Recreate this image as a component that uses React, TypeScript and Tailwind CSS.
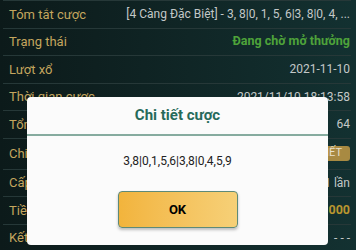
const rows: { label: string; value: string; kind?: 'green' | 'gold' | 'button'; tall?: boolean }[] = [
  { label: 'Tóm tắt cược', value: '[4 Càng Đặc Biệt] - 3, 8|0, 1, 5, 6|3, 8|0, 4, ...' },
  { label: 'Trạng thái', value: 'Đang chờ mở thưởng', kind: 'green' },
  { label: 'Lượt xổ', value: '2021-11-10' },
  { label: 'Thời gian cược', value: '2021/11/10 18:13:58' },
  { label: 'Tổng số cược', value: '64' },
  { label: 'Chi tiết cược', value: 'CHI TIẾT', kind: 'button', tall: true },
  { label: 'Cấp số nhân', value: '1 lần' },
  { label: 'Tiền cược', value: '64.000', kind: 'gold' },
  { label: 'Kết quả', value: '- - -' },
];

export default function App() {
  return (
    <div
      className="relative w-[356px] h-[250px] overflow-hidden bg-gradient-to-r from-[#0c1a1a] to-[#133131]"
      style={{ fontFamily: 'Roboto, "Noto Sans", sans-serif' }}
    >
      {/* danh sách chi tiết */}
      <div className="ml-[3px] mr-[5px] border-t border-[#263838]">
        {rows.map((r) => (
          <div
            key={r.label}
            className={`flex items-center justify-between border-b border-[#263838] pl-[6px] pr-[1px] ${r.tall ? 'h-[31px]' : 'h-[27.5px]'}`}
          >
            <span className="text-[13px] text-[#c4a65e] whitespace-nowrap">{r.label}</span>
            {r.kind === 'button' ? (
              <span className="rounded-[3px] bg-[#a88a42] px-[8px] h-[15px] flex items-center text-[11px] text-[#e8e0cc]">
                {r.value}
              </span>
            ) : (
              <span
                className={`whitespace-nowrap ${
                  r.kind === 'green'
                    ? 'text-[12.5px] text-[#4ea33a] font-bold'
                    : r.kind === 'gold'
                      ? 'text-[12.5px] text-[#b8962f] font-bold'
                      : 'text-[12px] text-[#c3c8c8]'
                }`}
              >
                {r.value}
              </span>
            )}
          </div>
        ))}
      </div>

      {/* hộp thoại */}
      <div className="absolute left-[27px] top-[97px] w-[301px] h-[148px] rounded-[4px] bg-[#fbfbfb] flex flex-col">
        <div className="h-[37px] flex items-center justify-center text-[15px] font-bold text-[#266a5a]">
          Chi tiết cược
        </div>
        <div className="h-[2px] bg-[#86ab9f]" />
        <div className="pt-[17px] text-center text-[12px] leading-[16px] text-[#222]">
          3,8|0,1,5,6|3,8|0,4,5,9
        </div>
        <div className="mt-[22px] flex justify-center">
          <button className="w-[120px] h-[37px] rounded-[4px] border border-[#5e8a78] bg-gradient-to-r from-[#f2b43c] to-[#f6d077] shadow-[0_2px_3px_rgba(0,0,0,0.25)] text-[13px] font-bold text-black">
            OK
          </button>
        </div>
      </div>
    </div>
  );
}
